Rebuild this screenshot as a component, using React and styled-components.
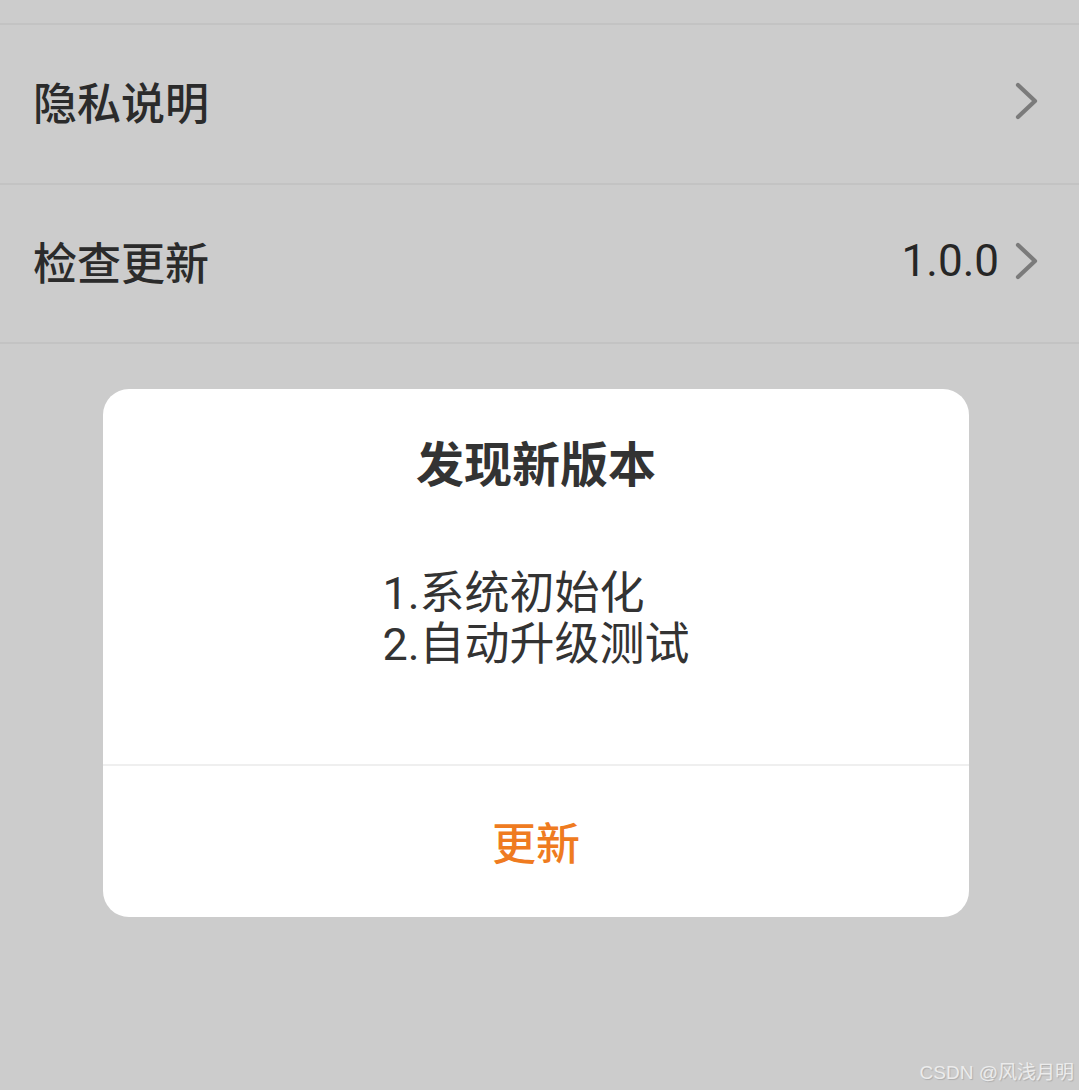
import React from "react";
import styled, { createGlobalStyle } from "styled-components";

const GlobalStyle = createGlobalStyle`
  body {
    margin: 0;
    background: #cccccc;
    font-family: Roboto, "Noto Sans CJK SC", sans-serif;
  }
`;

const Page = styled.div`
  position: relative;
  width: 100%;
  height: 1090px;
  background: #cccccc;
  overflow: hidden;
`;

const TopStub = styled.div`
  height: 23px;
`;

const List = styled.div`
  border-bottom: 2px solid #c3c3c3;
`;

const Row = styled.div`
  box-sizing: border-box;
  display: flex;
  align-items: center;
  justify-content: space-between;
  height: ${(p) => p.h}px;
  padding: 0 40px 6px 33px;
  border-top: 2px solid #c3c3c3;
`;

const Label = styled.span`
  font-family: "Noto Sans CJK SC", sans-serif;
  font-size: 44px;
  font-weight: 500;
  color: #2b2b2b;
`;

const Right = styled.div`
  display: flex;
  align-items: center;
  gap: 16px;
`;

const Value = styled.span`
  font-family: Roboto, sans-serif;
  font-size: 44px;
  color: #262626;
`;

const Overlay = styled.div`
  position: absolute;
  top: 389px;
  left: 103px;
`;

const Dialog = styled.div`
  width: 866px;
  height: 528px;
  background: #ffffff;
  border-radius: 26px;
  display: flex;
  flex-direction: column;
  overflow: hidden;
`;

const Title = styled.div`
  padding-top: 42px;
  text-align: center;
  font-family: "Noto Sans CJK SC", sans-serif;
  font-size: 48px;
  line-height: 60px;
  font-weight: 700;
  color: #333333;
`;

const Body = styled.div`
  display: flex;
  justify-content: center;
  padding-top: 77px;
  height: 196px;
`;

const Notes = styled.div`
  font-size: 45px;
  line-height: 51px;
  color: #333333;
  text-align: left;
`;

const Footer = styled.button`
  flex: 1;
  border: none;
  border-top: 2px solid #efefef;
  background: transparent;
  font-family: "Noto Sans CJK SC", sans-serif;
  font-size: 44px;
  font-weight: 500;
  color: #ef7b20;
  padding: 0 0 2px;
`;

const Watermark = styled.div`
  position: absolute;
  right: 5px;
  bottom: 6px;
  font-family: "Liberation Sans", "Noto Sans CJK SC", sans-serif;
  font-size: 19px;
  color: #ececec;
  text-shadow: 1px 1px 1px rgba(0, 0, 0, 0.15);
`;

function Chevron() {
  return (
    <svg width="24" height="38" viewBox="0 0 24 38">
      <polyline
        points="3,3 20,19 3,35"
        fill="none"
        stroke="#7b7b7b"
        strokeWidth="4.2"
        strokeLinecap="round"
        strokeLinejoin="round"
      />
    </svg>
  );
}

export default function App() {
  return (
    <Page>
      <GlobalStyle />
      <TopStub />
      <List>
        <Row h={160}>
          <Label>隐私说明</Label>
          <Right>
            <Chevron />
          </Right>
        </Row>
        <Row h={159}>
          <Label>检查更新</Label>
          <Right>
            <Value>1.0.0</Value>
            <Chevron />
          </Right>
        </Row>
      </List>

      <Overlay>
        <Dialog>
          <Title>发现新版本</Title>
          <Body>
            <Notes>
              1.系统初始化
              <br />
              2.自动升级测试
            </Notes>
          </Body>
          <Footer>更新</Footer>
        </Dialog>
      </Overlay>

      <Watermark>CSDN @风浅月明</Watermark>
    </Page>
  );
}
